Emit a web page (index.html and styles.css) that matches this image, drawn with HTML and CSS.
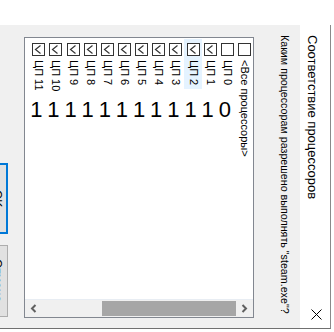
FILE: index.html
```html
<!DOCTYPE html>
<html>
<head>
<title>Соответствие процессоров</title>
<link rel="stylesheet" href="styles.css">
</head>
<body>
<div class="screen">
  <div class="dialog">
    <div class="buttons">
      <div class="btn btn-default"><span>OK</span></div>
      <div class="btn btn-cancel"><span>Отмена</span></div>
    </div>

    <div class="listbox">
      <div class="items">
        <div class="cpu">
          <div class="head">
            <svg class="box" viewBox="0 0 13 13"><rect x="0.5" y="0.5" width="12" height="12"/></svg>
            <span class="label">&lt;Все процессоры&gt;</span>
          </div>
        </div>
        <div class="cpu">
          <div class="head">
            <svg class="box" viewBox="0 0 13 13"><rect x="0.5" y="0.5" width="12" height="12"/></svg>
            <span class="label">ЦП 0</span>
          </div>
          <span class="digit">0</span>
        </div>
        <div class="cpu">
          <div class="head">
            <svg class="box" viewBox="0 0 13 13"><rect x="0.5" y="0.5" width="12" height="12"/><path d="M8.5 2.5 L3.5 6.5 L8.5 10.5"/></svg>
            <span class="label">ЦП 1</span>
          </div>
          <span class="digit">1</span>
        </div>
        <div class="cpu active">
          <div class="head">
            <svg class="box" viewBox="0 0 13 13"><rect x="0.5" y="0.5" width="12" height="12"/><path d="M8.5 2.5 L3.5 6.5 L8.5 10.5"/></svg>
            <span class="label">ЦП 2</span>
          </div>
          <span class="digit">1</span>
        </div>
        <div class="cpu">
          <div class="head">
            <svg class="box" viewBox="0 0 13 13"><rect x="0.5" y="0.5" width="12" height="12"/><path d="M8.5 2.5 L3.5 6.5 L8.5 10.5"/></svg>
            <span class="label">ЦП 3</span>
          </div>
          <span class="digit">1</span>
        </div>
        <div class="cpu">
          <div class="head">
            <svg class="box" viewBox="0 0 13 13"><rect x="0.5" y="0.5" width="12" height="12"/><path d="M8.5 2.5 L3.5 6.5 L8.5 10.5"/></svg>
            <span class="label">ЦП 4</span>
          </div>
          <span class="digit">1</span>
        </div>
        <div class="cpu">
          <div class="head">
            <svg class="box" viewBox="0 0 13 13"><rect x="0.5" y="0.5" width="12" height="12"/><path d="M8.5 2.5 L3.5 6.5 L8.5 10.5"/></svg>
            <span class="label">ЦП 5</span>
          </div>
          <span class="digit">1</span>
        </div>
        <div class="cpu">
          <div class="head">
            <svg class="box" viewBox="0 0 13 13"><rect x="0.5" y="0.5" width="12" height="12"/><path d="M8.5 2.5 L3.5 6.5 L8.5 10.5"/></svg>
            <span class="label">ЦП 6</span>
          </div>
          <span class="digit">1</span>
        </div>
        <div class="cpu">
          <div class="head">
            <svg class="box" viewBox="0 0 13 13"><rect x="0.5" y="0.5" width="12" height="12"/><path d="M8.5 2.5 L3.5 6.5 L8.5 10.5"/></svg>
            <span class="label">ЦП 7</span>
          </div>
          <span class="digit">1</span>
        </div>
        <div class="cpu">
          <div class="head">
            <svg class="box" viewBox="0 0 13 13"><rect x="0.5" y="0.5" width="12" height="12"/><path d="M8.5 2.5 L3.5 6.5 L8.5 10.5"/></svg>
            <span class="label">ЦП 8</span>
          </div>
          <span class="digit">1</span>
        </div>
        <div class="cpu">
          <div class="head">
            <svg class="box" viewBox="0 0 13 13"><rect x="0.5" y="0.5" width="12" height="12"/><path d="M8.5 2.5 L3.5 6.5 L8.5 10.5"/></svg>
            <span class="label">ЦП 9</span>
          </div>
          <span class="digit">1</span>
        </div>
        <div class="cpu">
          <div class="head">
            <svg class="box" viewBox="0 0 13 13"><rect x="0.5" y="0.5" width="12" height="12"/><path d="M8.5 2.5 L3.5 6.5 L8.5 10.5"/></svg>
            <span class="label">ЦП 10</span>
          </div>
          <span class="digit">1</span>
        </div>
        <div class="cpu">
          <div class="head">
            <svg class="box" viewBox="0 0 13 13"><rect x="0.5" y="0.5" width="12" height="12"/><path d="M8.5 2.5 L3.5 6.5 L8.5 10.5"/></svg>
            <span class="label">ЦП 11</span>
          </div>
          <span class="digit">1</span>
        </div>
      </div>

      <div class="hscroll">
        <div class="arrow">
          <svg width="7" height="9" viewBox="0 0 7 9"><path d="M5.5 1 L2 4.5 L5.5 8"/></svg>
        </div>
        <div class="track"><div class="thumb"></div></div>
        <div class="arrow">
          <svg width="7" height="9" viewBox="0 0 7 9"><path d="M1.5 1 L5 4.5 L1.5 8"/></svg>
        </div>
      </div>
    </div>

    <div class="question">Каким процессорам разрешено выполнять "steam.exe"?</div>

    <div class="titlebar">
      <span class="title">Соответствие процессоров</span>
      <svg class="close" width="11" height="11" viewBox="0 0 11 11"><path d="M0.5 0.5 L10.5 10.5 M10.5 0.5 L0.5 10.5"/></svg>
    </div>
  </div>
</div>
</body>
</html>
```

FILE: styles.css
```css
body{
    margin: 0;
    background: #fff;
    font-family: "Liberation Sans", Arial, sans-serif;
    color: #000;
    overflow: hidden;
}
.screen{
    width: 334px;
    height: 332px;
    padding-top: 25px;
    box-sizing: border-box;
    overflow: hidden;
}
.dialog{
    display: flex;
    width: 346px;
    height: 304px;
    margin-left: -15px;
    background: #f0f0f0;
    border-right: 1px solid #8a8a8a;
    border-bottom: 1px solid #707070;
    box-sizing: border-box;
}

/* buttons, cut off at the left edge */
.buttons{
    width: 23px;
    flex: none;
    display: flex;
    flex-direction: column;
    gap: 11px;
    padding-top: 138px;
}
.btn{
    height: 71px;
    background: #e1e1e1;
    border: 1px solid #adadad;
    box-sizing: border-box;
    writing-mode: vertical-rl;
    display: flex;
    align-items: center;
    justify-content: center;
    font-size: 12px;
}
.btn-default{
    border: 2px solid #0078d7;
}
.btn-cancel{
    height: 72px;
}

/* processor list */
.listbox{
    flex: none;
    width: 230px;
    height: 281px;
    margin: 12px 0 0 16px;
    border: 1px solid #828790;
    background: #fff;
    box-sizing: border-box;
    display: flex;
    flex-direction: column;
}
.items{
    flex: 1;
    display: flex;
    flex-direction: row-reverse;
}
.cpu{
    width: 17.15px;
    flex: none;
    display: flex;
    flex-direction: column;
    align-items: center;
}
.head{
    width: 100%;
    height: 50px;
    margin-top: 1px;
    padding-top: 4px;
    box-sizing: border-box;
    display: flex;
    flex-direction: column;
    align-items: center;
}
.cpu.active .head{
    background: #e5f3ff;
}
.box{
    width: 13px;
    height: 13px;
    flex: none;
    display: block;
}
.box rect{
    fill: #fff;
    stroke: #333;
    stroke-width: 1;
}
.box path{
    fill: none;
    stroke: #333;
    stroke-width: 1.2;
}
.label{
    writing-mode: vertical-rl;
    font-size: 11px;
    line-height: 13px;
    margin-top: 4px;
    white-space: nowrap;
}
.digit{
    font-size: 22px;
    line-height: 22px;
    margin-top: 10px;
    padding-right: 5px;
}

.hscroll{
    height: 18px;
    flex: none;
    border-top: 1px solid #e8edf3;
    background: #f0f0f0;
    display: flex;
    align-items: center;
    box-sizing: border-box;
}
.arrow{
    width: 17px;
    flex: none;
    display: flex;
    justify-content: center;
}
.arrow path{
    fill: none;
    stroke: #606060;
    stroke-width: 2;
}
.track{
    flex: 1;
    display: flex;
    justify-content: flex-end;
}
.thumb{
    width: 134px;
    height: 15px;
    background: #a6a6a6;
}

.question{
    writing-mode: vertical-rl;
    font-size: 10.7px;
    line-height: 16px;
    margin-left: 23px;
    padding-top: 10px;
    white-space: nowrap;
}

.titlebar{
    margin-left: auto;
    width: 30px;
    flex: none;
    background: #fff;
    writing-mode: vertical-rl;
    display: flex;
    justify-content: space-between;
    align-items: center;
    padding: 10px 7px 8px 0;
    box-sizing: border-box;
}
.title{
    font-size: 13px;
    line-height: 16px;
    white-space: nowrap;
}
.close{
    margin-left: 9px;
}
.close path{
    fill: none;
    stroke: #000;
    stroke-width: 1;
}
```
